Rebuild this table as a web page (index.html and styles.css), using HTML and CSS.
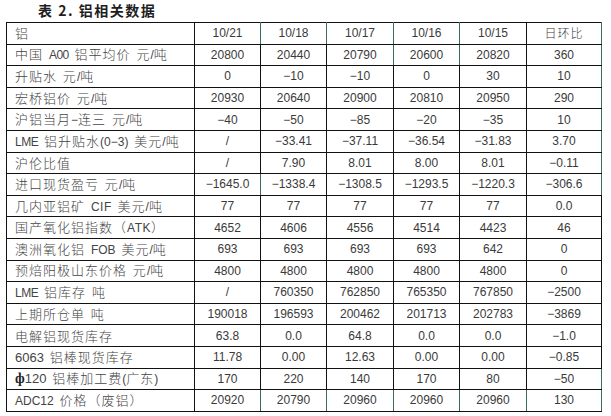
FILE: index.html
```html
<!DOCTYPE html>
<html lang="zh">
<head>
<meta charset="utf-8">
<link rel="stylesheet" href="styles.css">
</head>
<body>
<div class="title">表 2. 铝相关数据</div>
<table class="data">
<colgroup>
<col class="c0"><col class="c1"><col class="c2"><col class="c3"><col class="c4"><col class="c5"><col class="c6">
</colgroup>
<tr class="head"><td class="lab">铝</td><td class="tr">10/21</td><td class="tr">10/18</td><td class="tr">10/17</td><td class="tr">10/16</td><td>10/15</td><td class="cn tr">日环比</td></tr>
<tr><td class="lab">中国 <span class="nar">A00</span> 铝平均价 元<span class="lat">/</span>吨</td><td>20800</td><td>20440</td><td class="tr">20790</td><td class="tr">20600</td><td>20820</td><td class="tr">360</td></tr>
<tr><td class="lab">升贴水 元<span class="lat">/</span>吨</td><td>0</td><td>−10</td><td>−10</td><td>0</td><td>30</td><td class="tr">10</td></tr>
<tr><td class="lab">宏桥铝价 元<span class="lat">/</span>吨</td><td>20930</td><td>20640</td><td>20900</td><td>20810</td><td>20950</td><td class="tr">290</td></tr>
<tr><td class="lab">沪铝当月<span class="lat">−</span>连三 元<span class="lat">/</span>吨</td><td>−40</td><td>−50</td><td>−85</td><td>−20</td><td>−35</td><td class="tr">10</td></tr>
<tr><td class="lab"><span class="nar">LME</span> 铝升贴水<span class="lat">(0−3)</span> 美元<span class="lat">/</span>吨</td><td>/</td><td>−33.41</td><td>−37.11</td><td>−36.54</td><td>−31.83</td><td class="tr">3.70</td></tr>
<tr><td class="lab">沪伦比值</td><td>/</td><td>7.90</td><td>8.01</td><td>8.00</td><td>8.01</td><td class="tr">−0.11</td></tr>
<tr><td class="lab">进口现货盈亏 元<span class="lat">/</span>吨</td><td class="tr">−1645.0</td><td>−1338.4</td><td>−1308.5</td><td>−1293.5</td><td>−1220.3</td><td class="tr">−306.6</td></tr>
<tr><td class="lab">几内亚铝矿 <span class="lat sp">CIF</span> 美元<span class="lat">/</span>吨</td><td>77</td><td>77</td><td>77</td><td>77</td><td>77</td><td>0.0</td></tr>
<tr><td class="lab">国产氧化铝指数（<span class="lat sp">ATK</span>）</td><td>4652</td><td>4606</td><td>4556</td><td>4514</td><td>4423</td><td>46</td></tr>
<tr><td class="lab">澳洲氧化铝 <span class="lat">FOB</span> 美元<span class="lat">/</span>吨</td><td>693</td><td>693</td><td>693</td><td>693</td><td>642</td><td>0</td></tr>
<tr><td class="lab">预焙阳极山东价格 元<span class="lat">/</span>吨</td><td>4800</td><td>4800</td><td>4800</td><td>4800</td><td>4800</td><td>0</td></tr>
<tr><td class="lab"><span class="nar">LME</span> 铝库存 吨</td><td>/</td><td>760350</td><td>762850</td><td>765350</td><td>767850</td><td>−2500</td></tr>
<tr><td class="lab">上期所仓单 吨</td><td>190018</td><td>196593</td><td>200462</td><td>201713</td><td>202783</td><td>−3869</td></tr>
<tr><td class="lab">电解铝现货库存</td><td>63.8</td><td>0.0</td><td>64.8</td><td>0.0</td><td>0.0</td><td>−1.0</td></tr>
<tr><td class="lab"><span class="lat num">6063</span> 铝棒现货库存</td><td>11.78</td><td>0.00</td><td>12.63</td><td>0.00</td><td>0.00</td><td>−0.85</td></tr>
<tr><td class="lab"><b class="phi">ф</b><span class="lat num">120</span> 铝棒加工费<span class="lat">(</span>广东<span class="lat">)</span></td><td>170</td><td>220</td><td>140</td><td>170</td><td>80</td><td class="tr">−50</td></tr>
<tr class="last"><td class="lab"><span class="lat">ADC12</span> 价格（废铝）</td><td class="tr">20920</td><td class="tr">20790</td><td class="tr">20960</td><td class="tr">20960</td><td class="tr">20960</td><td class="tr">130</td></tr>
</table>
</body>
</html>
```

FILE: styles.css
```css
html, body {
  margin: 0;
  padding: 0;
  background: #ffffff;
}

.title {
  height: 22px;
  box-sizing: border-box;
  padding: 2px 0 0 38px;
  font-family: "Noto Sans CJK SC", "Noto Sans CJK JP", sans-serif;
  font-weight: 700;
  font-size: 14px;
  line-height: 17px;
  letter-spacing: 1.5px;
  color: #1e1e1e;
}

.data {
  margin-left: 6px;
  border-collapse: collapse;
  table-layout: fixed;
  width: 595px;
  font-family: "Liberation Sans", Arial, sans-serif;
  font-size: 12px;
  color: #3a3a3a;
}

.c0 { width: 188px; }
.c1 { width: 66px; }
.c2 { width: 66px; }
.c3 { width: 67px; }
.c4 { width: 66px; }
.c5 { width: 67px; }
.c6 { width: 75px; }

.data tr {
  height: 21.6px;
}

.data td {
  border: 1px solid #111111;
  padding: 0;
  text-align: center;
  vertical-align: middle;
  line-height: 14px;
  white-space: nowrap;
}

.data td.tr {
  border-right-color: #3b6b5d;
}

.data td.lab {
  text-align: left;
  padding-left: 8px;
  font-family: "Noto Sans CJK SC", "Noto Sans CJK JP", sans-serif;
  font-weight: 300;
  font-size: 13px;
  letter-spacing: 1px;
  word-spacing: 2px;
  color: #444444;
}

.lat {
  font-family: "Liberation Sans", Arial, sans-serif;
  font-weight: 400;
  font-size: 12px;
  letter-spacing: 0;
}

.lat.sp {
  letter-spacing: 0.5px;
}

.lat.num {
  font-size: 13px;
}

.nar {
  font-family: "Liberation Sans Narrow", "Liberation Sans", Arial, sans-serif;
  font-weight: 400;
  font-size: 12px;
  letter-spacing: -0.5px;
}

.data td.cn {
  font-family: "Noto Sans CJK SC", sans-serif;
  font-weight: 300;
  font-size: 12px;
  letter-spacing: 1px;
}

.phi {
  font-family: "Liberation Serif", serif;
  font-weight: 700;
  font-size: 14px;
  color: #222222;
  letter-spacing: 0;
}
```
